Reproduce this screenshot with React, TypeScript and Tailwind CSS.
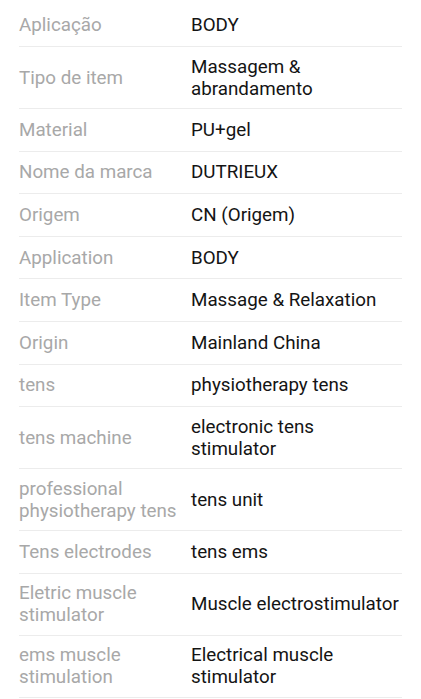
import React from 'react';

const rows: [string, string][] = [
  ['Aplicação', 'BODY'],
  ['Tipo de item', 'Massagem & abrandamento'],
  ['Material', 'PU+gel'],
  ['Nome da marca', 'DUTRIEUX'],
  ['Origem', 'CN (Origem)'],
  ['Application', 'BODY'],
  ['Item Type', 'Massage & Relaxation'],
  ['Origin', 'Mainland China'],
  ['tens', 'physiotherapy tens'],
  ['tens machine', 'electronic tens stimulator'],
  ['professional physiotherapy tens', 'tens unit'],
  ['Tens electrodes', 'tens ems'],
  ['Eletric muscle stimulator', 'Muscle electrostimulator'],
  ['ems muscle stimulation', 'Electrical muscle stimulator'],
];

export default function App() {
  return (
    <div className="bg-white min-h-screen px-[19px] pt-[4.5px] font-['Roboto',sans-serif] text-[18.8px] leading-[22px]">
      {rows.map(([label, value], i) => (
        <div
          key={i}
          className="flex items-center min-h-[42.6px] py-[8.5px] border-b border-[#ececec]"
        >
          <div className="w-[172px] shrink-0 pr-[10px] text-[#a8a8a8]">{label}</div>
          <div className="flex-1 text-[#141414]">{value}</div>
        </div>
      ))}
    </div>
  );
}
